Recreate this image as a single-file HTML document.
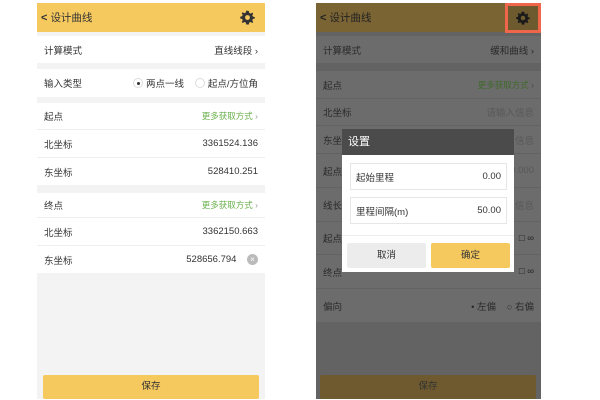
<!DOCTYPE html>
<html><head><meta charset="utf-8"><style>
*{margin:0;padding:0;box-sizing:border-box}
body{width:600px;height:400px;background:#fff;position:relative;overflow:hidden;font-family:"Liberation Sans","Noto Sans CJK SC",sans-serif;font-size:9.5px;color:#333}
.a{position:absolute}
.row{position:absolute;left:0;right:0;background:#fff;display:flex;align-items:center;justify-content:space-between;padding:0 7px}
.line{border-bottom:1px solid #eee}
.g{color:#6ab04c;font-size:8.5px}
.dr .row{background:#6c6c6c;color:#2a2a2a}
.dr .line{border-bottom:1px solid #636363}
.dr .g{color:#3f6a2a}
</style></head><body>

<!-- LEFT PHONE -->
<div class="a" style="left:37px;top:3px;width:228px;height:396px;background:#f3f3f3">
  <div class="a" style="left:0;top:0;width:228px;height:29px;background:#f5c95e;display:flex;align-items:center;padding-left:4px;font-size:10.5px;color:#333">
    <span style="font-size:11px;font-weight:bold;margin-right:3px">&lt;</span>设计曲线
    <svg class="a" style="right:10px;top:7px" width="15" height="15" viewBox="0 0 16 16"><path d="M8 0.8l1.4 0.2.4 2 1.5.8 1.8-1 1 1-1 1.8.7 1.5 2 .5v1.4l-2 .5-.7 1.5 1 1.8-1 1-1.8-1-1.5.7-.4 2H6.6l-.4-2-1.5-.7-1.8 1-1-1 1-1.8-.7-1.5-2-.5V7.2l2-.5.7-1.5-1-1.8 1-1 1.8 1 1.5-.8.4-2z" fill="#333"/><circle cx="8" cy="8" r="2.6" fill="#f5c95e"/></svg>
  </div>
  <div class="row" style="top:33px;height:27px">计算模式<span>直线线段 ›</span></div>
  <div class="row" style="top:66px;height:28px">输入类型<span style="display:flex;align-items:center;gap:3px"><span style="display:inline-block;width:10px;height:10px;border:1px solid #ddd;border-radius:50%;position:relative"><span style="position:absolute;left:3px;top:3px;width:3px;height:3px;background:#333;border-radius:50%"></span></span>两点一线&nbsp;&nbsp;&nbsp;<span style="display:inline-block;width:10px;height:10px;border:1px solid #ddd;border-radius:50%"></span>起点/方位角</span></div>
  <div class="row line" style="top:100px;height:27px">起点<span class="g">更多获取方式 <span style="color:#999">›</span></span></div>
  <div class="row line" style="top:127px;height:28px">北坐标<span>3361524.136</span></div>
  <div class="row" style="top:155px;height:27px">东坐标<span>528410.251</span></div>
  <div class="row line" style="top:190px;height:25px">终点<span class="g">更多获取方式 <span style="color:#999">›</span></span></div>
  <div class="row line" style="top:215px;height:28px">北坐标<span>3362150.663</span></div>
  <div class="row" style="top:243px;height:27px">东坐标<span style="display:flex;align-items:center">528656.794&nbsp;&nbsp;&nbsp;&nbsp;<span style="display:inline-block;width:11px;height:11px;border-radius:50%;background:#bbb;color:#fff;font-size:8px;text-align:center;line-height:11px">×</span></span></div>
  <div class="a" style="left:6px;top:372px;width:216px;height:24px;background:#f5c95e;border-radius:2px;text-align:center;line-height:24px">保存</div>
</div>

<!-- RIGHT PHONE -->
<div class="a dr" style="left:316px;top:3px;width:225px;height:396px;background:#636363">
  <div class="a" style="left:0;top:0;width:225px;height:29px;background:#7b6434;display:flex;align-items:center;padding-left:4px;font-size:10.5px;color:#222">
    <span style="font-size:11px;font-weight:bold;margin-right:3px">&lt;</span>设计曲线
  </div>
  <div class="a" style="left:189px;top:0;width:36px;height:30px;border:3px solid #f0664a;background:#6e5a2f">
    <svg class="a" style="left:8px;top:5px" width="14" height="14" viewBox="0 0 16 16"><path d="M8 0.8l1.4 0.2.4 2 1.5.8 1.8-1 1 1-1 1.8.7 1.5 2 .5v1.4l-2 .5-.7 1.5 1 1.8-1 1-1.8-1-1.5.7-.4 2H6.6l-.4-2-1.5-.7-1.8 1-1-1 1-1.8-.7-1.5-2-.5V7.2l2-.5.7-1.5-1-1.8 1-1 1.8 1 1.5-.8.4-2z" fill="#1a1a1a"/><circle cx="8" cy="8" r="2.6" fill="#6e5a2f"/></svg>
  </div>
  <div class="row" style="top:33px;height:27px">计算模式<span>缓和曲线 ›</span></div>
  <div class="row line" style="top:68px;height:28px">起点<span class="g">更多获取方式 <span style="color:#444">›</span></span></div>
  <div class="row line" style="top:96px;height:27px">北坐标<span style="color:#585858">请输入信息</span></div>
  <div class="row line" style="top:123px;height:28px">东坐标<span style="color:#585858">信息</span></div>
  <div class="row line" style="top:151px;height:34px">起点<span style="color:#585858">0.000</span></div>
  <div class="row line" style="top:185px;height:34px">线长<span style="color:#585858">信息</span></div>
  <div class="row line" style="top:219px;height:33px">起点<span style="color:#222">□ ∞</span></div>
  <div class="row line" style="top:252px;height:34px">终点<span style="color:#222">□ ∞</span></div>
  <div class="row line" style="top:286px;height:34px">偏向<span>• 左偏 &nbsp;&nbsp; ○ 右偏</span></div>
  <div class="a" style="left:4px;top:372px;width:216px;height:24px;background:#6e5a2e;border-radius:2px;text-align:center;line-height:24px;color:#333">保存</div>
</div>

<!-- DIALOG -->
<div class="a" style="left:342px;top:129px;width:172px;height:26px;background:#4b4b4b;color:#fff;font-size:11px;line-height:26px;padding-left:6px">设置</div>
<div class="a" style="left:342px;top:155px;width:172px;height:117px;background:#fff">
  <div class="a" style="left:8px;top:8px;width:157px;height:27px;border:1px solid #e6e6e6;display:flex;justify-content:space-between;align-items:center;padding:0 5px">起始里程<span>0.00</span></div>
  <div class="a" style="left:8px;top:42px;width:157px;height:27px;border:1px solid #e6e6e6;display:flex;justify-content:space-between;align-items:center;padding:0 5px">里程间隔(m)<span>50.00</span></div>
  <div class="a" style="left:0;top:80px;width:172px;border-top:1px solid #eee"></div>
  <div class="a" style="left:5px;top:88px;width:79px;height:25px;background:#ececec;border-radius:2px;text-align:center;line-height:25px">取消</div>
  <div class="a" style="left:89px;top:88px;width:79px;height:25px;background:#f5c95e;border-radius:2px;text-align:center;line-height:25px">确定</div>
</div>
</body></html>
